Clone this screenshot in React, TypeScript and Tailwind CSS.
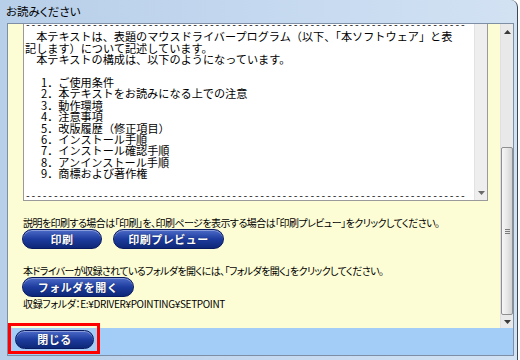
import React from "react";

const JP = "font-['Noto_Sans_CJK_JP',sans-serif]";

function NavyButton({ label, w, h = 20 }: { label: string; w: number; h?: number }) {
  return (
    <div
      className={`relative flex items-center justify-center rounded-full border border-[#0a1a60] bg-gradient-to-b from-[#4d6bc8] via-[#1d3c9e] to-[#0e2878] text-white text-[11px] font-bold tracking-[0.5px] shadow-[inset_0_1px_0_rgba(255,255,255,0.35)] ${JP}`}
      style={{ width: w, height: h }}
    >
      <span className="leading-none [text-shadow:0_0_1px_rgba(0,0,0,0.6)]">{label}</span>
    </div>
  );
}

function Arrow({ dir, color = "#3a3a3a" }: { dir: "up" | "down"; color?: string }) {
  return (
    <svg width="7" height="4" viewBox="0 0 7 4">
      {dir === "up" ? (
        <path d="M0 4 L3.5 0 L7 4 Z" fill={color} />
      ) : (
        <path d="M0 0 L7 0 L3.5 4 Z" fill={color} />
      )}
    </svg>
  );
}

const DASH = "-".repeat(79);

const items = [
  "1．ご使用条件",
  "2．本テキストをお読みになる上での注意",
  "3．動作環境",
  "4．注意事項",
  "5．改版履歴（修正項目）",
  "6．インストール手順",
  "7．インストール確認手順",
  "8．アンインストール手順",
  "9．商標および著作権",
];

function DashRow() {
  return (
    <div className="h-[11.4px] font-['Liberation_Mono',monospace] text-[9.6px] tracking-[-0.18px] leading-[11.4px] text-black">
      {DASH}
    </div>
  );
}

export default function App() {
  return (
    <div className="w-[520px] h-[360px] bg-white overflow-hidden relative">
      <div className="w-[518px] h-[360px] flex flex-col bg-gradient-to-r from-[#b8cfe9] via-[#c4d8ef] to-[#d2e2f3] border-r border-[#3e4854] rounded-tr-[7px]">
        {/* title bar */}
        <div className={`h-[23px] flex items-center pl-[6px] text-[11.5px] text-black [font-feature-settings:'palt'] ${JP}`}>
          お読みください
        </div>
        {/* body */}
        <div className="ml-[7px] w-[507px] h-[333px] border border-[#7d8ea5] flex flex-col">
          {/* upper */}
          <div className="h-[304px] flex">
            {/* yellow page */}
            <div className="w-[492px] h-full bg-[#fdfdd5] pl-[15px] flex flex-col">
              {/* text box */}
              <div className="w-[465px] h-[177px] border-l border-r border-b border-[#9a9a9a] flex bg-white shrink-0">
                <div className={`w-[450px] h-full overflow-hidden pl-[1px] text-[11.15px] leading-[11.4px] text-black whitespace-pre ${JP}`}>
                  <div className="-mt-[4px]">
                    <DashRow />
                    <div className="h-[11.4px]">　本テキストは、表題のマウスドライバープログラム（以下、「本ソフトウェア」と表</div>
                    <div className="h-[11.4px]">記します）について記述しています。</div>
                    <div className="h-[11.4px]">　本テキストの構成は、以下のようになっています。</div>
                    <div className="h-[11.4px]"></div>
                    {items.map((t) => (
                      <div key={t} className="h-[11.4px] pl-[16px]">
                        {t}
                      </div>
                    ))}
                    <div className="h-[11.4px]"></div>
                    <DashRow />
                    <div className="h-[11.4px] pl-[32px]">ご使用条件</div>
                  </div>
                </div>
                {/* inner scrollbar */}
                <div className="w-[13px] h-full bg-[#eeeeee] border-l border-[#e2e2e2] flex flex-col justify-end items-center pb-[5px]">
                  <Arrow dir="down" color="#6a6a6a" />
                </div>
              </div>

              <div className={`mt-[16px] h-[12px] leading-[12px] text-[10px] tracking-[-0.56px] text-black whitespace-nowrap [font-feature-settings:'palt'] ${JP}`}>
                説明を印刷する場合は「印刷」を、印刷ページを表示する場合は「印刷プレビュー」をクリックしてください。
              </div>
              <div className="flex gap-[11px] -ml-[1px]">
                <NavyButton label="印刷" w={80} />
                <NavyButton label="印刷プレビュー" w={111} />
              </div>

              <div className={`mt-[16px] h-[12px] leading-[12px] text-[10px] tracking-[-0.6px] text-black whitespace-nowrap [font-feature-settings:'palt'] ${JP}`}>
                本ドライバーが収録されているフォルダを開くには、「フォルダを開く」をクリックしてください。
              </div>
              <div className="flex -ml-[1px]">
                <NavyButton label="フォルダを開く" w={112} />
              </div>
              <div className={`mt-[1px] h-[11px] leading-[11px] text-[10px] tracking-[-0.35px] text-black whitespace-nowrap [font-feature-settings:'palt'] ${JP}`}>
                収録フォルダ：E:¥DRIVER¥POINTING¥SETPOINT
              </div>
            </div>
            {/* outer scrollbar */}
            <div className="w-[13px] h-full bg-[#e9e9e9] border-l border-[#e0e0e0] flex flex-col">
              <div className="h-[16px] flex items-center justify-center">
                <Arrow dir="up" />
              </div>
              <div className="h-[107px]"></div>
              <div className="h-[168px] rounded-[2px] border border-[#8f8f8f] bg-gradient-to-r from-[#f6f6f6] via-[#e8e8e8] to-[#d2d2d2] flex flex-col items-center justify-center gap-[1px]">
                <div className="w-[5px] h-px bg-[#7a7a7a]"></div>
                <div className="w-[5px] h-px bg-[#7a7a7a]"></div>
                <div className="w-[5px] h-px bg-[#7a7a7a]"></div>
              </div>
              <div className="h-[13px] flex items-center justify-center">
                <Arrow dir="down" />
              </div>
            </div>
          </div>
          {/* bottom bar */}
          <div className="h-[27px] bg-[#a3cdf7] pl-[7px] pt-[2px]">
            <NavyButton label="閉じる" w={79} h={19} />
          </div>
        </div>
      </div>
      {/* red annotation box */}
      <div className="absolute left-[8px] top-[323px] w-[92px] h-[31px] border-[3px] border-[#ff0000]"></div>
    </div>
  );
}
